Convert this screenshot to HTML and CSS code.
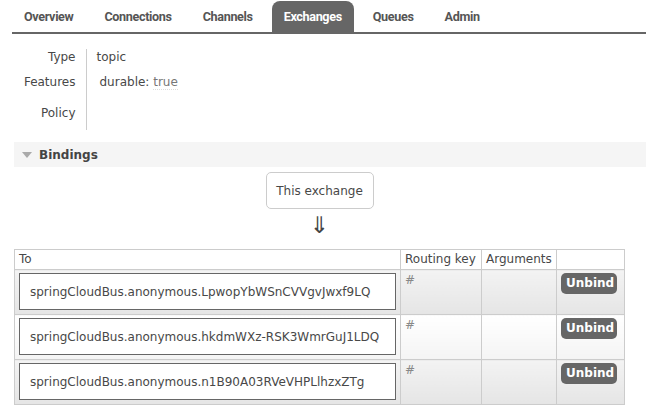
FILE: index.html
```html
<!DOCTYPE html>
<html>
<head>
<meta charset="utf-8">
<link rel="stylesheet" href="styles.css">
</head>
<body>
<ul class="tabs">
  <li><a>Overview</a></li>
  <li><a>Connections</a></li>
  <li><a>Channels</a></li>
  <li class="active"><a>Exchanges</a></li>
  <li><a>Queues</a></li>
  <li><a>Admin</a></li>
</ul>
<div class="main">
  <table class="facts">
    <tr class="r-type"><th>Type</th><td>topic</td></tr>
    <tr class="r-feat"><th>Features</th><td><span class="feat">durable: <abbr>true</abbr></span></td></tr>
    <tr class="r-policy"><th>Policy</th><td></td></tr>
  </table>

  <div class="section-h"><span class="tri"></span>Bindings</div>

  <div class="bindings">
    <div class="this-ex"><span>This exchange</span></div>
    <div class="arrow">⇓</div>
    <table class="list">
      <thead>
        <tr><th class="c-to">To</th><th class="c-rk">Routing key</th><th class="c-args">Arguments</th><th class="c-act"></th></tr>
      </thead>
      <tbody>
        <tr class="alt1"><td class="c-to"><span class="q">springCloudBus.anonymous.LpwopYbWSnCVVgvJwxf9LQ</span></td><td class="c-rk">#</td><td></td><td class="c-act"><span class="btn">Unbind</span></td></tr>
        <tr class="alt2"><td class="c-to"><span class="q">springCloudBus.anonymous.hkdmWXz-RSK3WmrGuJ1LDQ</span></td><td class="c-rk">#</td><td></td><td class="c-act"><span class="btn">Unbind</span></td></tr>
        <tr class="alt1"><td class="c-to"><span class="q">springCloudBus.anonymous.n1B90A03RVeVHPLlhzxZTg</span></td><td class="c-rk">#</td><td></td><td class="c-act"><span class="btn">Unbind</span></td></tr>
      </tbody>
    </table>
  </div>
</div>
</body>
</html>
```
FILE: styles.css
```css
* { box-sizing: border-box; }
body {
  margin: 0;
  font-family: "DejaVu Sans", Verdana, sans-serif;
  font-size: 12px;
  color: #484848;
  background: #fff;
}
.tabs {
  list-style: none;
  margin: 0 0 0 12px;
  padding: 1px 0 0 0;
  display: flex;
  gap: 7px;
  height: 34px;
  border-bottom: 2px solid #666;
}
.tabs li a {
  display: block;
  height: 32px;
  padding: 0 12px;
  line-height: 32px;
  font-family: "Roboto", sans-serif;
  font-weight: bold;
  font-size: 12.6px;
  letter-spacing: -0.35px;
  color: #555;
  border-radius: 8px 8px 0 0;
}
.tabs li.active a {
  background: #666;
  color: #fff;
}
.main {
  padding: 15px 0 0 14px;
}
.facts {
  border-collapse: collapse;
}
.facts th {
  font-weight: normal;
  text-align: right;
  color: #484848;
  width: 72px;
  padding: 0 10px 0 0;
  vertical-align: top;
}
.facts td {
  border-left: 1px solid #ccc;
  padding: 0 0 0 10px;
  vertical-align: top;
  width: 200px;
}
.r-type th, .r-type td { padding-top: 1px; height: 25px; }
.r-feat th, .r-feat td { height: 28px; padding-top: 1px; }
.r-feat td { padding-left: 13px; }
.r-policy th, .r-policy td { height: 28px; padding-top: 4px; }
.feat { color: #484848; }
.feat abbr { color: #777; text-decoration: none; border-bottom: 1px dotted #ddd; }

.section-h {
  margin-top: 12px;
  height: 25px;
  background: #f5f5f5;
  display: flex;
  align-items: center;
  font-weight: bold;
  color: #444;
  padding-left: 8px;
}
.tri {
  width: 0;
  height: 0;
  border-left: 5px solid transparent;
  border-right: 5px solid transparent;
  border-top: 6px solid #aaa;
  margin-right: 7px;
}
.bindings {
  width: 611px;
  display: flex;
  flex-direction: column;
  align-items: center;
}
.this-ex {
  margin-top: 5px;
  width: 108px;
  height: 37px;
  border: 1px solid #ccc;
  border-radius: 5px;
  display: flex;
  align-items: center;
  justify-content: center;
  color: #484848;
}
.arrow {
  margin-top: 2px;
  font-size: 23px;
  line-height: 28px;
  height: 28px;
  color: #444;
}
.list {
  margin-top: 10px;
  width: 611px;
  border-collapse: collapse;
}
.list th, .list td {
  border: 1px solid #ccc;
  text-align: left;
  vertical-align: top;
}
.list th {
  font-weight: normal;
  height: 20px;
  padding: 2px 4px 0 4px;
  color: #484848;
}
.list td {
  height: 45px;
  padding: 2px 4px;
}
.c-to { width: 386px; }
.c-rk { width: 81px; }
.c-act { width: 68px; }
.list td.c-to { padding: 3px 4px 3px 4px; }
.q {
  display: flex;
  align-items: center;
  height: 37px;
  border: 1px solid #666;
  background: #fff;
  padding-left: 10px;
  color: #484848;
}
.list td.c-rk { color: #888; padding-top: 3px; }
.alt1 td { background: linear-gradient(#f3f3f3, #e5e5e5); }
.alt2 td { background: linear-gradient(#fff, #f4f4f4); }
.list td.c-act { padding: 3px 4px; }
.btn {
  display: inline-block;
  background: #666;
  color: #fff;
  font-weight: bold;
  border-radius: 5px;
  padding: 0 5px;
  height: 21px;
  line-height: 21px;
  width: 56px;
  text-align: center;
}
```
